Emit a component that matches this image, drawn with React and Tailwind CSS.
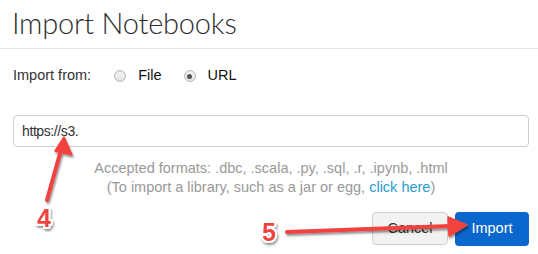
import React from 'react';

// Radio dot drawn with spans so it matches the mac-style look
const Radio = ({ checked }) => (
    <span className="inline-flex items-center justify-center w-[12px] h-[12px] rounded-full border border-[#b8b8b8] bg-gradient-to-b from-[#fafafa] to-[#e2e2e2] shadow-[inset_0_1px_1px_rgba(0,0,0,0.08)]">
        {checked && <span className="w-[5px] h-[5px] rounded-full bg-[#555]" />}
    </span>
);

const Annotations = () => (
    <svg className="absolute inset-0 pointer-events-none" width="538" height="254" viewBox="0 0 538 254">
        <defs>
            <filter id="shadow" x="-20%" y="-20%" width="140%" height="140%">
                <feDropShadow dx="1" dy="2" stdDeviation="1.2" floodColor="#000" floodOpacity="0.45" />
            </filter>
        </defs>

        {/* arrow 4 */}
        <g filter="url(#shadow)">
            <line x1="47" y1="200" x2="61" y2="150" stroke="#f2433f" strokeWidth="4" strokeLinecap="round" />
            <path d="M64 137 L72 155 L55 151 Z" fill="#f2433f" stroke="#f2433f" strokeWidth="1.5" strokeLinejoin="round" />
        </g>

        {/* arrow 5 */}
        <g filter="url(#shadow)">
            <line x1="287" y1="232" x2="450" y2="226" stroke="#f2433f" strokeWidth="4" strokeLinecap="round" />
            <path d="M467 225 L448 217 L449 236 Z" fill="#f2433f" stroke="#f2433f" strokeWidth="1.5" strokeLinejoin="round" />
        </g>

        <g filter="url(#shadow)" style={{ fontFamily: '"Liberation Sans", Arial, sans-serif', fontWeight: 700 }}>
            <text x="44" y="227" textAnchor="middle" fontSize="25" fill="#f2433f" stroke="#fff" strokeWidth="4" paintOrder="stroke" strokeLinejoin="round">4</text>
            <text x="269" y="241" textAnchor="middle" fontSize="25" fill="#f2433f" stroke="#fff" strokeWidth="4" paintOrder="stroke" strokeLinejoin="round">5</text>
        </g>
    </svg>
);

const App = () => {
    return (
        <div className="relative w-[538px] h-[254px] bg-white overflow-hidden font-['Liberation_Sans',Arial,sans-serif] text-[#333]">
            {/* Header */}
            <div className="h-[49px] border-b border-[#e5e5e5] px-[12px] pt-[8px]">
                <h1 className="font-['Lato',sans-serif] text-[29px] leading-[30px] font-light tracking-[-0.2px] text-[#2e2e2e]">Import Notebooks</h1>
            </div>

            <div className="pl-[13px] pr-[9px]">
                {/* Source choice */}
                <div className="flex items-center h-[20px] mt-[17px] text-[14.5px]">
                    <span className="text-[#333]">Import from:</span>
                    <span className="ml-[23px] flex"><Radio /></span>
                    <span className="ml-[12px] text-[#111]">File</span>
                    <span className="ml-[22px] flex"><Radio checked /></span>
                    <span className="ml-[12px] text-[#111]">URL</span>
                </div>

                {/* URL input */}
                <div className="mt-[29px] h-[32px] rounded-[4px] border border-[#cfcfcf] flex items-center px-[8px] text-[14px] tracking-[-0.4px] text-[#333]">
                    https://s3.
                </div>

                {/* Help text */}
                <div className="mt-[12px] text-center text-[14.5px] leading-[19px] text-[#999]">
                    <p>Accepted formats: .dbc, .scala, .py, .sql, .r, .ipynb, .html</p>
                    <p>
                        (To import a library, such as a jar or egg, <span className="text-[#2a9bcf]">click here</span>)
                    </p>
                </div>

                {/* Actions */}
                <div className="flex justify-end gap-[7px] mt-[15px]">
                    <button className="h-[33px] w-[76px] rounded-[4px] border border-[#cfcfcf] bg-[#f2f2f2] text-[14.5px] text-[#333]">
                        Cancel
                    </button>
                    <button className="h-[34px] w-[74px] rounded-[4px] bg-[#0a67cd] text-[14.5px] text-white">
                        Import
                    </button>
                </div>
            </div>

            <Annotations />
        </div>
    );
};

export default App;
